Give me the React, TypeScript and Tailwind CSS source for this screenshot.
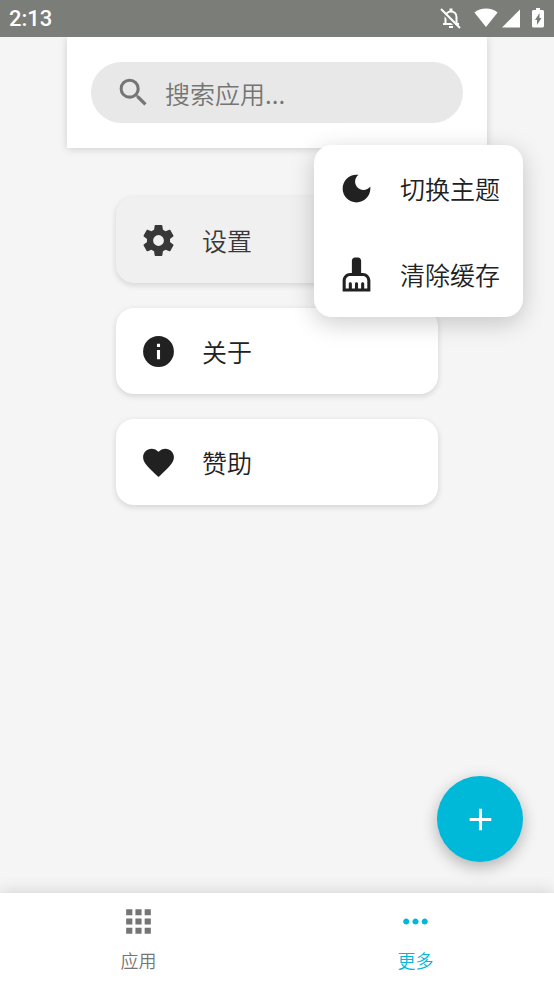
interface IconProps {
  path: string;
  className?: string;
}

const icons = {
  search:
    "M9.5,3A6.5,6.5 0 0,1 16,9.5C16,11.11 15.41,12.59 14.44,13.73L14.71,14H15.5L20.5,19L19,20.5L14,15.5V14.71L13.73,14.44C12.59,15.41 11.11,16 9.5,16A6.5,6.5 0 0,1 3,9.5A6.5,6.5 0 0,1 9.5,3M9.5,5C7,5 5,7 5,9.5C5,12 7,14 9.5,14C12,14 14,12 14,9.5C14,7 12,5 9.5,5Z",
  cog: "M12,15.5A3.5,3.5 0 0,1 8.5,12A3.5,3.5 0 0,1 12,8.5A3.5,3.5 0 0,1 15.5,12A3.5,3.5 0 0,1 12,15.5M19.43,12.97C19.47,12.65 19.5,12.33 19.5,12C19.5,11.67 19.47,11.34 19.43,11L21.54,9.37C21.73,9.22 21.78,8.95 21.66,8.73L19.66,5.27C19.54,5.05 19.27,4.96 19.05,5.05L16.56,6.05C16.04,5.66 15.5,5.32 14.87,5.07L14.5,2.42C14.46,2.18 14.25,2 14,2H10C9.75,2 9.54,2.18 9.5,2.42L9.13,5.07C8.5,5.32 7.96,5.66 7.44,6.05L4.95,5.05C4.73,4.96 4.46,5.05 4.34,5.27L2.34,8.73C2.21,8.95 2.27,9.22 2.46,9.37L4.57,11C4.53,11.34 4.5,11.67 4.5,12C4.5,12.33 4.53,12.65 4.57,12.97L2.46,14.63C2.27,14.78 2.21,15.05 2.34,15.27L4.34,18.73C4.46,18.95 4.73,19.03 4.95,18.95L7.44,17.94C7.96,18.34 8.5,18.68 9.13,18.93L9.5,21.58C9.54,21.82 9.75,22 10,22H14C14.25,22 14.46,21.82 14.5,21.58L14.87,18.93C15.5,18.67 16.04,18.34 16.56,17.94L19.05,18.95C19.27,19.03 19.54,18.95 19.66,18.73L21.66,15.27C21.78,15.05 21.73,14.78 21.54,14.63L19.43,12.97Z",
  info: "M13,9H11V7H13M13,17H11V11H13M12,2A10,10 0 0,0 2,12A10,10 0 0,0 12,22A10,10 0 0,0 22,12A10,10 0 0,0 12,2Z",
  heart:
    "M12,21.35L10.55,20.03C5.4,15.36 2,12.27 2,8.5C2,5.41 4.42,3 7.5,3C9.24,3 10.91,3.81 12,5.08C13.09,3.81 14.76,3 16.5,3C19.58,3 22,5.41 22,8.5C22,12.27 18.6,15.36 13.45,20.03L12,21.35Z",
  moon: "M12 3c-4.97 0-9 4.03-9 9s4.03 9 9 9 9-4.03 9-9c0-.46-.04-.92-.1-1.36-.98 1.37-2.58 2.26-4.4 2.26-2.98 0-5.4-2.42-5.4-5.4 0-1.81.89-3.42 2.26-4.4-.44-.06-.9-.1-1.36-.1z",
  brush:
    "M16 11h-1V3c0-1.1-.9-2-2-2h-2c-1.1 0-2 .9-2 2v8H8c-2.76 0-5 2.24-5 5v7h18v-7c0-2.76-2.24-5-5-5zm3 10h-2v-3c0-.55-.45-1-1-1s-1 .45-1 1v3h-2v-3c0-.55-.45-1-1-1s-1 .45-1 1v3H9v-3c0-.55-.45-1-1-1s-1 .45-1 1v3H5v-5c0-1.65 1.35-3 3-3h8c1.65 0 3 1.35 3 3v5z",
  plus: "M19,13H13V19H11V13H5V11H11V5H13V11H19V13Z",
  apps: "M4 8h4V4H4v4zm6 12h4v-4h-4v4zm-6 0h4v-4H4v4zm0-6h4v-4H4v4zm6 0h4v-4h-4v4zm6-10v4h4V4h-4zm-6 4h4V4h-4v4zm6 6h4v-4h-4v4zm0 6h4v-4h-4v4z",
  more: "M6 10c-1.1 0-2 .9-2 2s.9 2 2 2 2-.9 2-2-.9-2-2-2zm12 0c-1.1 0-2 .9-2 2s.9 2 2 2 2-.9 2-2-.9-2-2-2zm-6 0c-1.1 0-2 .9-2 2s.9 2 2 2 2-.9 2-2-.9-2-2-2z",
};

const Icon = ({ path, className = "" }: IconProps) => (
  <svg viewBox="0 0 24 24" fill="currentColor" aria-hidden="true" className={`size-[37px] shrink-0 ${className}`}>
    <path d={path} />
  </svg>
);

const cards = [
  { label: "设置", icon: icons.cog, active: true },
  { label: "关于", icon: icons.info, active: false },
  { label: "赞助", icon: icons.heart, active: false },
];

const menuItems = [
  { label: "切换主题", icon: icons.moon },
  { label: "清除缓存", icon: icons.brush },
];

const tabs = [
  { label: "应用", icon: icons.apps, active: false },
  { label: "更多", icon: icons.more, active: true },
];

const StatusBar = () => (
  <div className="relative z-10 flex h-[37px] items-center justify-between bg-[#7b7d79] pr-[10px] pl-[9px] text-white">
    <span className="pt-px font-[Roboto] text-[22px] leading-6 font-medium">2:13</span>
    <div className="flex items-center pb-px" aria-hidden="true">
      {/* muted bell */}
      <svg viewBox="0 0 22 22" className="mr-3 size-[22px]" fill="none" stroke="currentColor" strokeWidth="2">
        <path d="M5.500 17V10C5.500 6.500 8 4.500 11 4.500s5.500 2 5.500 5.500v7" />
        <path d="M3 17H19" />
        <path d="M11 1.500V4.500" strokeWidth="3" />
        <path d="M9 20H13" />
        <path d="M0 3.500 18 21.500" stroke="#7b7d79" />
        <path d="M1 2 20 21" />
      </svg>
      <svg viewBox="0 0 24 20" className="mr-1 h-5 w-6" fill="currentColor">
        <path d="M12 19 .4 4.500C3.500 2 7.500.5 12 .5s8.500 1.500 11.600 4z" />
      </svg>
      <svg viewBox="0 0 18 20" className="mr-3 h-5 w-[18px]" fill="currentColor">
        <path d="M18 1.500v18H0z" />
      </svg>
      <svg viewBox="0 0 12 20" className="h-5 w-3" fill="currentColor">
        <path d="M4 0h4v2h2.500c.8 0 1.500.7 1.500 1.500v14.500c0 .8-.7 1.500-1.500 1.500h-9C.7 19.500 0 18.800 0 18V3.500C0 2.700.7 2 1.500 2H4z" />
        <path d="M7.500 5v5H9.500L5 17V12H3z" fill="#7b7d79" />
      </svg>
    </div>
  </div>
);

const SearchHeader = () => (
  <header className="bg-white px-6 py-[25px] shadow-[0_1px_8px_rgba(0,0,0,0.16)]">
    <div className="flex h-[61px] items-center rounded-full bg-[#e8e8e8] px-6 text-[#757575]">
      <Icon path={icons.search} />
      <input
        type="search"
        aria-label="搜索应用"
        placeholder="搜索应用..."
        className="ml-[13px] h-10 min-w-0 flex-1 bg-transparent outline-none placeholder:text-[#757575]"
      />
    </div>
  </header>
);

const PopupMenu = () => (
  <div className="absolute top-[145px] right-[31px] z-20 w-[209px] overflow-hidden rounded-[18px] bg-white shadow-[0_6px_24px_rgba(0,0,0,0.2)]">
    {menuItems.map((item) => (
      <button key={item.label} type="button" className="flex h-[86px] w-full items-center gap-[25px] pr-5 pl-6">
        <Icon path={item.icon} />
        <span className="whitespace-nowrap">{item.label}</span>
      </button>
    ))}
  </div>
);

export default function App() {
  return (
    <div className="relative flex min-h-screen flex-col bg-[#f5f5f5] font-['Noto_Sans_CJK_SC',sans-serif] text-[25px] leading-9 font-[350] text-[#212121]">
      <StatusBar />
      <main className="relative flex-1">
        <div className="mx-auto max-w-[420px]">
          <SearchHeader />
          <div className="flex flex-col gap-[25px] px-[49px] py-[49px]">
            {cards.map((card) => (
              <button
                key={card.label}
                type="button"
                className={`flex h-[86px] items-center gap-[25px] rounded-[18px] px-6 shadow-[0_2px_6px_rgba(0,0,0,0.14)] ${
                  card.active ? "bg-[#f0f0f0] text-[#383838]" : "bg-white"
                }`}
              >
                <Icon path={card.icon} />
                <span>{card.label}</span>
              </button>
            ))}
          </div>
        </div>
        <button
          type="button"
          aria-label="添加"
          className="absolute right-[31px] bottom-[31px] flex size-[86px] items-center justify-center rounded-full bg-[#00b8d8] text-white shadow-[0_5px_16px_rgba(0,0,0,0.28)]"
        >
          <Icon path={icons.plus} />
        </button>
      </main>
      <nav className="relative flex h-[92px] bg-white shadow-[0_0_16px_rgba(0,0,0,0.16)]">
        {tabs.map((tab) => (
          <a
            key={tab.label}
            href="#"
            className={`flex flex-1 flex-col items-center pt-[10px] text-lg ${
              tab.active ? "text-[#00b8d8]" : "text-[#757575]"
            }`}
          >
            <Icon path={tab.icon} />
            <span className="mt-2 leading-6">{tab.label}</span>
          </a>
        ))}
      </nav>
      <PopupMenu />
    </div>
  );
}
